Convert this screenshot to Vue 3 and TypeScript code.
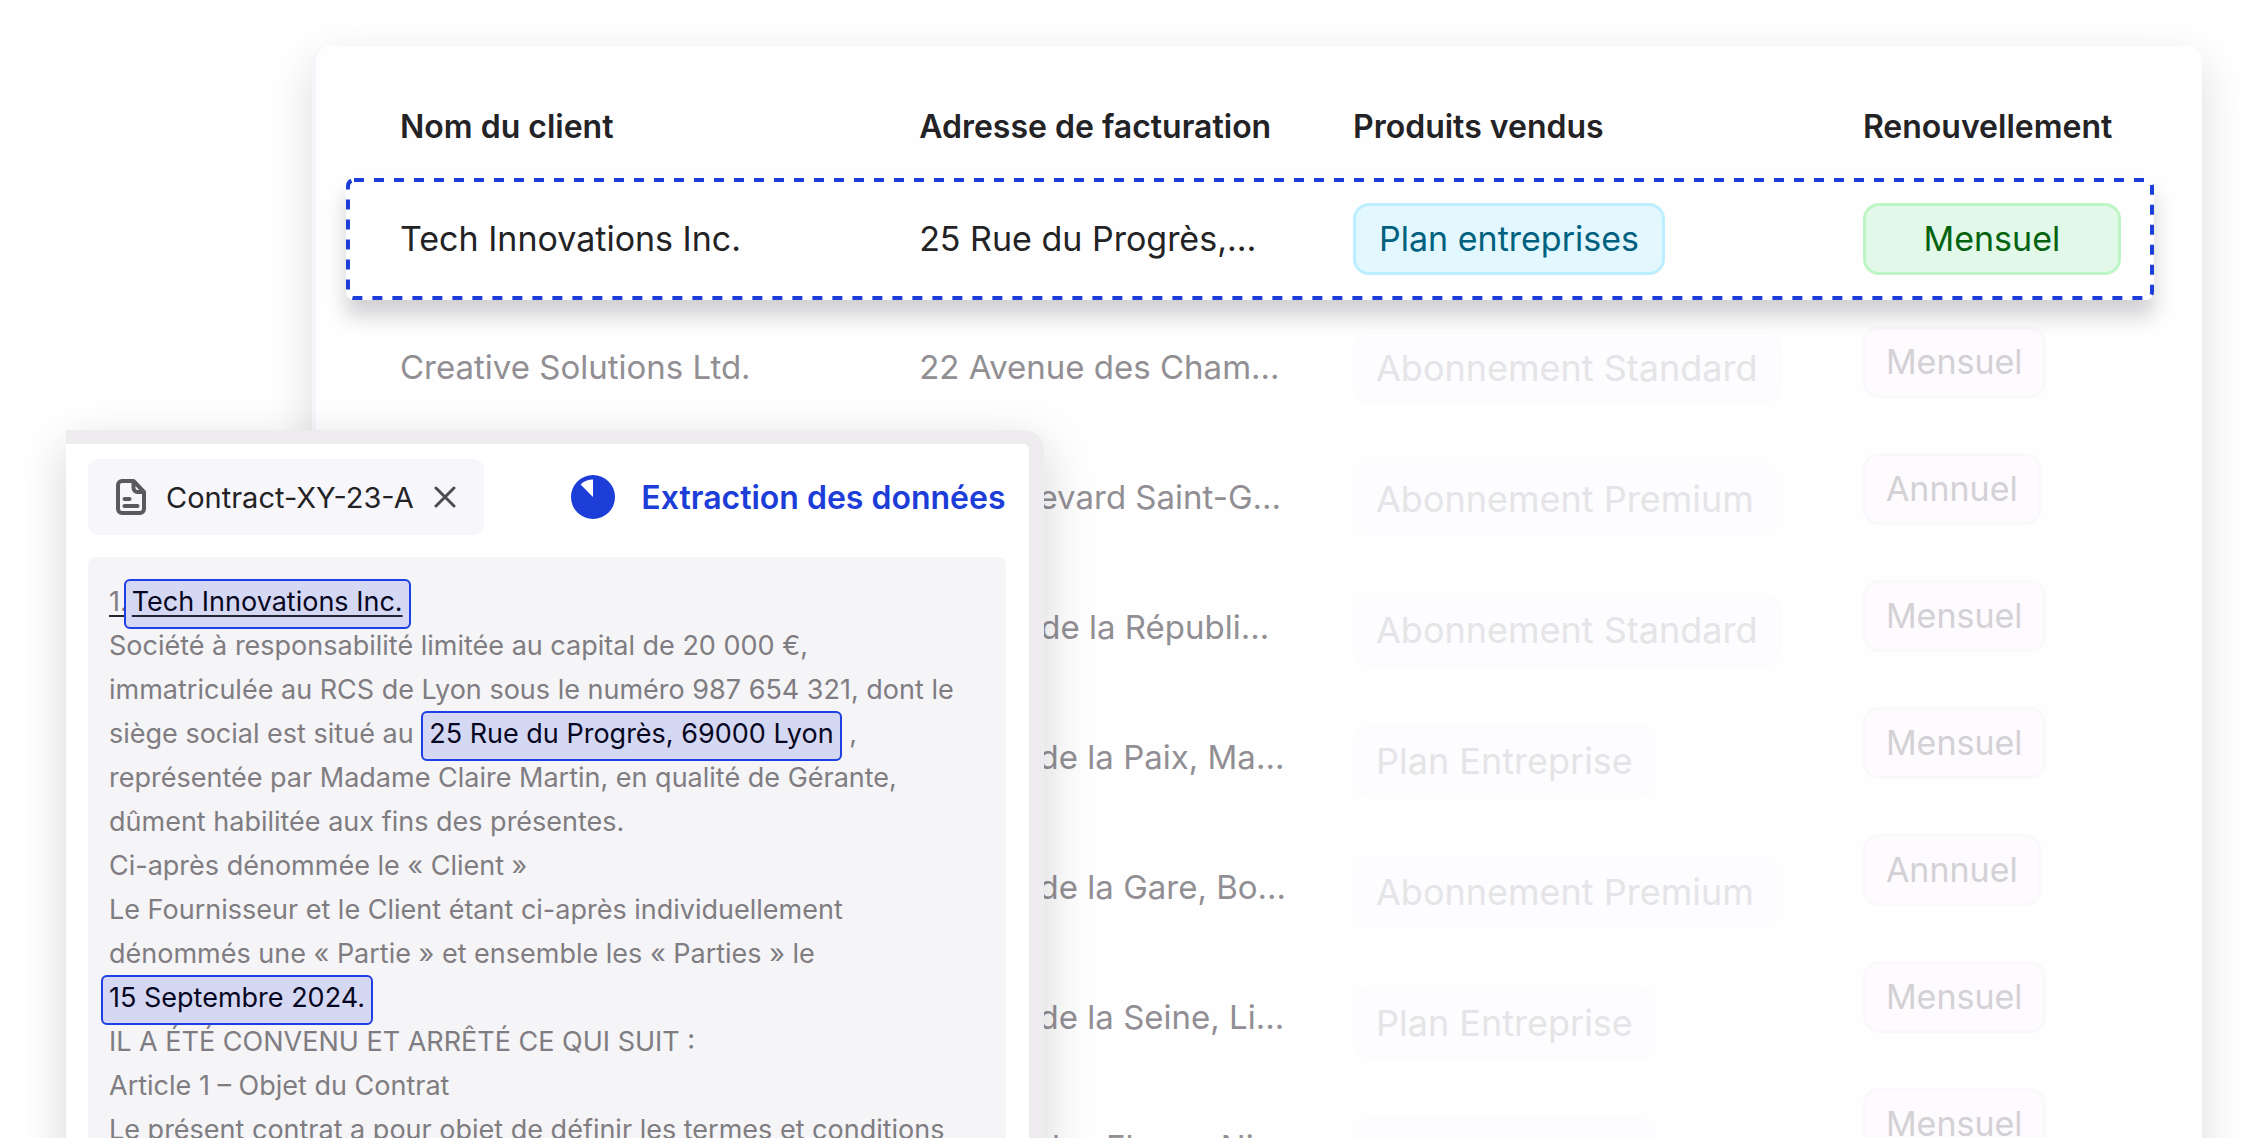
<script setup lang="ts">
interface Row {
  name: string
  address: string
  product: string
  renewal: string
}

interface Piece {
  text: string
  mark?: boolean
}

const headers: string[] = ['Nom du client', 'Adresse de facturation', 'Produits vendus', 'Renouvellement']

const active: Row = {
  name: 'Tech Innovations Inc.',
  address: '25 Rue du Progrès,…',
  product: 'Plan entreprises',
  renewal: 'Mensuel',
}

const rows: Row[] = [
  { name: 'Creative Solutions Ltd.', address: '22 Avenue des Cham…', product: 'Abonnement Standard', renewal: 'Mensuel' },
  { name: '', address: '30 Boulevard Saint-G…', product: 'Abonnement Premium', renewal: 'Annnuel' },
  { name: '', address: '44 Rue de la Républi…', product: 'Abonnement Standard', renewal: 'Mensuel' },
  { name: '', address: '20 Rue de la Paix, Ma…', product: 'Plan Entreprise', renewal: 'Mensuel' },
  { name: '', address: '20 Rue de la Gare, Bo…', product: 'Abonnement Premium', renewal: 'Annnuel' },
  { name: '', address: '20 Rue de la Seine, Li…', product: 'Plan Entreprise', renewal: 'Mensuel' },
  { name: '', address: '40 Rue des Fleurs, Ni…', product: 'Plan Entreprise', renewal: 'Mensuel' },
]

const lines: Piece[][] = [
  [{ text: 'Société à responsabilité limitée au capital de 20 000 €,' }],
  [{ text: 'immatriculée au RCS de Lyon sous le numéro 987 654 321, dont le' }],
  [{ text: 'siège social est situé au ' }, { text: '25 Rue du Progrès, 69000 Lyon', mark: true }, { text: ' ,' }],
  [{ text: 'représentée par Madame Claire Martin, en qualité de Gérante,' }],
  [{ text: 'dûment habilitée aux fins des présentes.' }],
  [{ text: 'Ci-après dénommée le « Client »' }],
  [{ text: 'Le Fournisseur et le Client étant ci-après individuellement' }],
  [{ text: 'dénommés une « Partie » et ensemble les « Parties » le' }],
  [{ text: '15 Septembre 2024.', mark: true }],
  [{ text: 'IL A ÉTÉ CONVENU ET ARRÊTÉ CE QUI SUIT :' }],
  [{ text: 'Article 1 – Objet du Contrat' }],
  [{ text: 'Le présent contrat a pour objet de définir les termes et conditions' }],
]
</script>

<template>
  <main class="page">
    <section class="card">
      <table class="clients">
        <colgroup>
          <col class="col-name" />
          <col class="col-address" />
          <col class="col-product" />
          <col />
        </colgroup>
        <thead>
          <tr>
            <th v-for="h in headers" :key="h" scope="col">{{ h }}</th>
          </tr>
        </thead>
        <tbody>
          <tr class="active">
            <td>
              <div class="frame">
                <svg width="100%" height="100%" aria-hidden="true">
                  <rect class="dashes" rx="6" />
                </svg>
              </div>
              {{ active.name }}
            </td>
            <td>{{ active.address }}</td>
            <td><span class="badge blue">{{ active.product }}</span></td>
            <td><span class="badge green">{{ active.renewal }}</span></td>
          </tr>
          <tr v-for="(row, i) in rows" :key="i" class="faded" :style="{ '--i': i }">
            <td class="text">{{ row.name }}</td>
            <td class="text">{{ row.address }}</td>
            <td class="product"><span class="badge pale">{{ row.product }}</span></td>
            <td class="renewal"><span class="badge soft">{{ row.renewal }}</span></td>
          </tr>
        </tbody>
      </table>
    </section>

    <aside class="panel">
      <header class="bar">
        <div class="file">
          <svg class="doc" viewBox="0 0 30 36" width="30" height="36" fill="none" stroke="#5b595e" stroke-width="4" stroke-linecap="round" stroke-linejoin="round" aria-hidden="true">
            <path d="M17.500 2H6a4 4 0 0 0-4 4v24a4 4 0 0 0 4 4h18a4 4 0 0 0 4-4V13z" />
            <path d="M17.500 3v6a4 4 0 0 0 4 4H27" />
            <path d="M8.500 20h5M8.500 27h13" />
          </svg>
          <span>Contract-XY-23-A</span>
          <button type="button" aria-label="Fermer">
            <svg viewBox="0 0 22 22" width="22" height="22" fill="none" stroke="#4d4b50" stroke-width="3" stroke-linecap="round" aria-hidden="true">
              <path d="M2 2l18 18M20 2L2 20" />
            </svg>
          </button>
        </div>
        <div class="status">
          <svg viewBox="0 0 44 44" width="44" height="44" aria-hidden="true">
            <circle cx="22" cy="22" r="22" fill="#1c3dd8" />
            <path d="M22 22V4.500a17.500 17.500 0 0 0-12.400 5.100z" fill="#fff" />
          </svg>
          <span>Extraction des données</span>
        </div>
      </header>
      <article class="contract">
        <p class="first">1.<mark>Tech Innovations Inc.</mark></p>
        <p v-for="(line, n) in lines" :key="n">
          <template v-for="(piece, k) in line" :key="k">
            <mark v-if="piece.mark" :class="{ leading: k === 0 }">{{ piece.text }}</mark>
            <template v-else>{{ piece.text }}</template>
          </template>
        </p>
      </article>
    </aside>
  </main>
</template>

<style>
body {
  background: #fff;
}
</style>

<style scoped>
.page {
  position: relative;
  box-sizing: border-box;
  height: 100vh;
  overflow: hidden;
  padding: 46px 66px 0 312px;
  font-family: Inter, "Liberation Sans", sans-serif;
  color: #232225;
}

.card {
  padding: 28px 48px 48px 30px;
  border-left: 4px solid #f8f6fa;
  border-radius: 16px;
  background: #fefefe;
  box-shadow: 0 16px 48px rgba(0, 0, 0, 0.14);
}

.clients {
  width: 100%;
  table-layout: fixed;
  border-collapse: separate;
  border-spacing: 0;
  font-size: 34px;
  line-height: 44px;
  white-space: nowrap;
}

.col-name {
  width: 31.7%;
}

.col-address {
  width: 24%;
}

.col-product {
  width: 28.2%;
}

th,
td {
  padding: 0;
  text-align: left;
}

th:first-child,
td:first-child {
  padding-left: 54px;
}

th {
  box-sizing: border-box;
  height: 104px;
  padding-top: 2px;
  font-size: 32px;
  font-weight: 600;
}

.active {
  position: relative;
  z-index: 0;
}

.active td {
  height: 122px;
}

.frame {
  position: absolute;
  inset: 0;
  z-index: -1;
  border-radius: 8px;
  background: #fefefe;
  box-shadow: 0 16px 20px rgba(35, 25, 40, 0.2);
}

.frame svg {
  display: block;
}

.dashes {
  x: 2px;
  y: 2px;
  width: calc(100% - 4px);
  height: calc(100% - 4px);
  fill: none;
  stroke: #1c3dd8;
  stroke-width: 4px;
  stroke-dasharray: 10 10;
}

.badge {
  display: inline-block;
  box-sizing: border-box;
  height: 72px;
  padding: 0 20px;
  border: 3px solid;
  border-radius: 16px;
  line-height: 66px;
  vertical-align: top;
}

.blue {
  padding: 0 23px;
  border-color: #bdeeff;
  background: #e3f7fe;
  color: #00617f;
}

.green {
  width: 258px;
  border-color: #bdf5c4;
  background: #e2f9e9;
  color: #046210;
  text-align: center;
}

.faded td {
  height: 131px;
  box-sizing: border-box;
  vertical-align: top;
}

.faded .text {
  padding-top: calc(45px - var(--i) * 1px);
  color: #918f93;
  font-size: 33px;
}

.faded .product {
  padding-top: 32px;
}

.faded .renewal {
  padding-top: calc(26px - var(--i) * 4px);
}

.pale {
  border-color: #fdfbfe;
  background: #fdfcfe;
  color: #e5e4e7;
  font-size: 36px;
}

.soft {
  border-color: #faf8fb;
  background: #fdfbfe;
  color: #d3d1d5;
}

.panel {
  position: absolute;
  top: 430px;
  left: 66px;
  box-sizing: border-box;
  width: 43.1%;
  padding: 15px 23px 22px 22px;
  border: solid #eeecef;
  border-width: 14px 15px 0 0;
  border-radius: 0 20px 0 0;
  background: #fff;
  box-shadow: 0 16px 48px rgba(35, 25, 40, 0.18);
  white-space: nowrap;
}

.bar {
  display: flex;
  align-items: center;
  justify-content: space-between;
  margin-bottom: 22px;
}

.file {
  display: flex;
  align-items: center;
  gap: 20px;
  height: 76px;
  padding: 0 28px;
  border-radius: 10px;
  background: #f7f6fb;
  font-size: 29px;
}

button {
  display: flex;
  padding: 0;
  border: 0;
  background: none;
}

.status {
  display: flex;
  align-items: center;
  gap: 26px;
  color: #1c3dd8;
  font-size: 32px;
  font-weight: 600;
}

.contract {
  padding: 23px 21px;
  border-radius: 8px;
  background: #f5f4f7;
  color: #7f7d81;
  font-size: 27px;
  line-height: 44px;
}

p {
  margin: 0;
}

mark {
  padding: 4px 6px 9px;
  border: 2px solid #1e3fe4;
  border-radius: 6px;
  background: #d5d8f3;
  color: #080722;
}

.leading {
  margin-left: -8px;
}

.first {
  text-decoration: underline #232230 2px;
  text-underline-offset: 4px;
}

.first mark {
  margin-left: -4px;
}
</style>
